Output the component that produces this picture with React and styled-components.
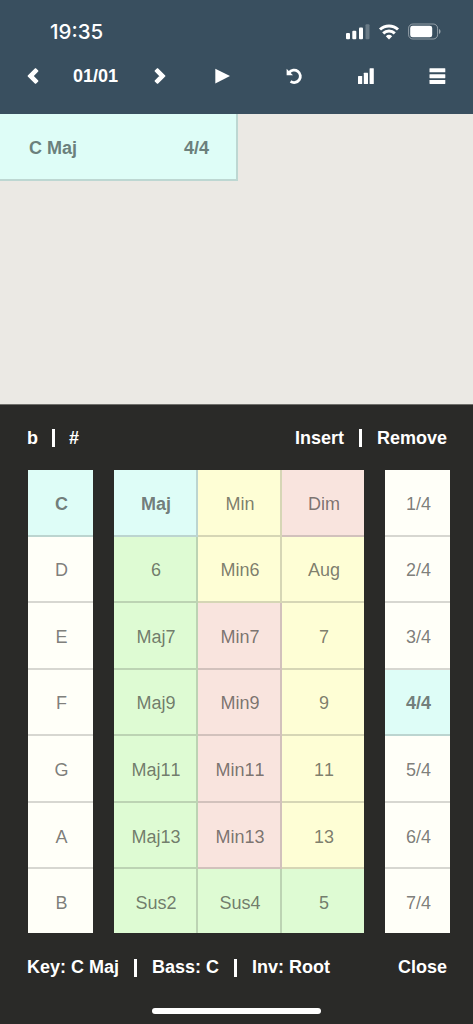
import { useState } from "react";
import styled, { createGlobalStyle } from "styled-components";

const GlobalStyle = createGlobalStyle`
  * {
    box-sizing: border-box;
  }
  body {
    margin: 0;
    background: #2a2a28;
    font-family: "Liberation Sans", Arial, sans-serif;
    font-size: 18px;
    font-kerning: none;
  }
`;

const Screen = styled.div`
  display: flex;
  flex-direction: column;
  width: 473px;
  height: 1024px;
  overflow: hidden;
`;

const Header = styled.header`
  height: 114px;
  background: #394f5f;
  color: #fff;
`;

const StatusBar = styled.div`
  display: flex;
  align-items: center;
  justify-content: space-between;
  height: 56px;
  padding: 7px 32px 0 50px;
`;

const Clock = styled.span`
  font-family: Inter, sans-serif;
  font-size: 20.5px;
  font-weight: 500;
  line-height: 24px;
`;

const StatusIcons = styled.svg`
  display: block;
  width: 96px;
  height: 20px;
`;

const Toolbar = styled.nav`
  display: grid;
  grid-template-columns: 50px 75px 53px 72px 72px 72px 71px;
  align-items: center;
  height: 40px;
  padding-left: 8px;
`;

const IconButton = styled.button`
  display: flex;
  align-items: center;
  justify-content: center;
  height: 40px;
  padding: 0;
  border: 0;
  background: none;
  color: inherit;
  cursor: pointer;
`;

const Icon = styled.svg`
  display: block;
  width: 20px;
  height: 20px;
  fill: currentColor;
`;

const Position = styled.span`
  text-align: center;
  font-weight: 700;
  white-space: nowrap;
`;

const Song = styled.main`
  height: 290px;
  background: #ebe9e4;
`;

const Chord = styled.div`
  display: flex;
  align-items: center;
  justify-content: space-between;
  width: 238px;
  height: 67px;
  padding: 1px 29px 0;
  background: #defdf7;
  box-shadow: inset -2px -2px 0 #bdd7d2;
  color: #6b807c;
  font-weight: 700;
`;

const Editor = styled.section`
  height: 620px;
  border-top: 1px solid #6f6f6b;
  background: #2a2a28;
  color: #fff;
`;

const Bar = styled.div`
  display: flex;
  align-items: center;
  justify-content: space-between;
  height: ${({ $height }) => $height}px;
  padding: 1px 26px 0 27px;
  font-weight: 700;
`;

const Group = styled.div`
  display: flex;
  align-items: center;
  gap: ${({ $gap }) => $gap || 15}px;
  white-space: nowrap;
`;

const Divider = styled.i`
  width: 3px;
  height: 18px;
  background: #fff;
`;

const Pads = styled.div`
  display: flex;
  justify-content: space-between;
  padding: 0 23px 0 28px;
`;

const PadFrame = styled.div`
  width: ${({ $width }) => $width}px;
  height: 463px;
  overflow: hidden;
`;

const PadGrid = styled.div`
  display: grid;
  grid-template-columns: repeat(${({ $columns }) => $columns}, 1fr);
  grid-template-rows: repeat(7, 1fr);
  width: calc(100% + 2px);
  height: 466px;
`;

const tones = {
  white: "#fffff8",
  green: "#defbd3",
  yellow: "#fefed5",
  pink: "#f9e4de",
  active: "#defdf7",
};

const Pad = styled.button`
  padding: 2px 0 0;
  border: 0;
  background: ${({ $tone }) => tones[$tone]};
  box-shadow: inset -2px -2px 0 rgba(42, 42, 40, 0.19);
  color: rgba(42, 42, 40, 0.62);
  font-family: inherit;
  font-size: 18px;
  font-weight: ${({ $tone }) => ($tone === "active" ? 700 : 400)};
  font-kerning: none;
  cursor: pointer;
`;

const HomeIndicator = styled.div`
  width: 169px;
  height: 6px;
  margin: 7px auto 0;
  border-radius: 3px;
  background: #fff;
`;

const keys = ["C", "D", "E", "F", "G", "A", "B"];
const times = ["1/4", "2/4", "3/4", "4/4", "5/4", "6/4", "7/4"];
const types = [
  ["Maj", "green"],
  ["Min", "yellow"],
  ["Dim", "pink"],
  ["6", "green"],
  ["Min6", "yellow"],
  ["Aug", "yellow"],
  ["Maj7", "green"],
  ["Min7", "pink"],
  ["7", "yellow"],
  ["Maj9", "green"],
  ["Min9", "pink"],
  ["9", "yellow"],
  ["Maj11", "green"],
  ["Min11", "pink"],
  ["11", "yellow"],
  ["Maj13", "green"],
  ["Min13", "pink"],
  ["13", "yellow"],
  ["Sus2", "green"],
  ["Sus4", "green"],
  ["5", "green"],
];

const Chevron = ({ right }) => (
  <Icon viewBox="0 0 20 20">
    <path
      d={
        right
          ? "M5.2 5 7.5 2.8 14.8 10 7.5 17.2 5.2 15 10.1 10Z"
          : "M14.8 5 12.5 2.8 5.2 10 12.5 17.2 14.8 15 9.9 10Z"
      }
      stroke="currentColor"
      strokeWidth="1.2"
      strokeLinejoin="round"
    />
  </Icon>
);

const PadColumn = ({ items, columns = 1, width, value, onChange }) => (
  <PadFrame $width={width}>
    <PadGrid $columns={columns}>
      {items.map(([label, tone]) => (
        <Pad
          key={label}
          $tone={label === value ? "active" : tone}
          onClick={() => onChange(label)}
        >
          {label}
        </Pad>
      ))}
    </PadGrid>
  </PadFrame>
);

const App = () => {
  const [note, setNote] = useState("C");
  const [type, setType] = useState("Maj");
  const [time, setTime] = useState("4/4");

  return (
    <Screen>
      <GlobalStyle />
      <Header>
        <StatusBar>
          <Clock>19:35</Clock>
          <StatusIcons viewBox="0 0 96 20" fill="#fff">
            <rect x="1" y="11" width="4" height="6.3" rx="1" />
            <rect x="7.3" y="8.7" width="4" height="8.6" rx="1" />
            <rect x="14" y="5.5" width="4" height="11.8" rx="1" />
            <rect x="20.5" y="2.3" width="4" height="15" rx="1" opacity="0.25" />
            <g fill="none" stroke="#fff" strokeWidth="3">
              <path d="M35 7.5a13.1 13.1 0 0 1 18 0" />
              <path d="M38.2 11.4a8.4 8.4 0 0 1 11.6 0" />
            </g>
            <path d="M40.8 14.2a4.8 4.8 0 0 1 6.4 0L44 17.5Z" />
            <rect
              x="63.6"
              y="2"
              width="29"
              height="15"
              rx="4.3"
              fill="none"
              stroke="#fff"
              strokeOpacity="0.45"
            />
            <rect x="65.2" y="3.7" width="22" height="11.6" rx="2.4" />
            <path d="M94 7.1c2 .7 2 4.1 0 4.8Z" opacity="0.5" />
          </StatusIcons>
        </StatusBar>
        <Toolbar>
          <IconButton aria-label="Previous page">
            <Chevron />
          </IconButton>
          <Position>01/01</Position>
          <IconButton aria-label="Next page">
            <Chevron right />
          </IconButton>
          <IconButton aria-label="Play">
            <Icon viewBox="0 0 20 20">
              <path d="M3.3 2.7 18 10 3.3 17.4Z" />
            </Icon>
          </IconButton>
          <IconButton aria-label="Undo">
            <Icon viewBox="0 0 20 20">
              <path
                d="M5.2 6.6A6.2 6.2 0 1 1 6.6 15.4"
                fill="none"
                stroke="currentColor"
                strokeWidth="2.8"
              />
              <path d="M2.6 2.8 9 9.2H2.6Z" />
            </Icon>
          </IconButton>
          <IconButton aria-label="Levels">
            <Icon viewBox="0 0 20 20">
              <rect x="2" y="10" width="4.2" height="8" rx="0.5" />
              <rect x="7.8" y="6.7" width="4.2" height="11.3" rx="0.5" />
              <rect x="13.6" y="2.3" width="4.2" height="15.7" rx="0.5" />
            </Icon>
          </IconButton>
          <IconButton aria-label="Menu">
            <Icon viewBox="0 0 20 20">
              <rect x="1.5" y="2.3" width="15.8" height="4" rx="0.4" />
              <rect x="1.5" y="8.2" width="15.8" height="4" rx="0.4" />
              <rect x="1.5" y="14" width="15.8" height="4" rx="0.4" />
            </Icon>
          </IconButton>
        </Toolbar>
      </Header>
      <Song>
        <Chord>
          <span>C Maj</span>
          <span>4/4</span>
        </Chord>
      </Song>
      <Editor>
        <Bar $height={65}>
          <Group $gap={14}>
            <span>b</span>
            <Divider />
            <span>#</span>
          </Group>
          <Group>
            <span>Insert</span>
            <Divider />
            <span>Remove</span>
          </Group>
        </Bar>
        <Pads>
          <PadColumn
            items={keys.map((k) => [k, "white"])}
            width={65}
            value={note}
            onChange={setNote}
          />
          <PadColumn
            items={types}
            columns={3}
            width={250}
            value={type}
            onChange={setType}
          />
          <PadColumn
            items={times.map((t) => [t, "white"])}
            width={65}
            value={time}
            onChange={setTime}
          />
        </Pads>
        <Bar $height={68}>
          <Group>
            <span>Key: C Maj</span>
            <Divider />
            <span>Bass: C</span>
            <Divider />
            <span>Inv: Root</span>
          </Group>
          <span>Close</span>
        </Bar>
        <HomeIndicator />
      </Editor>
    </Screen>
  );
};

export default App;
